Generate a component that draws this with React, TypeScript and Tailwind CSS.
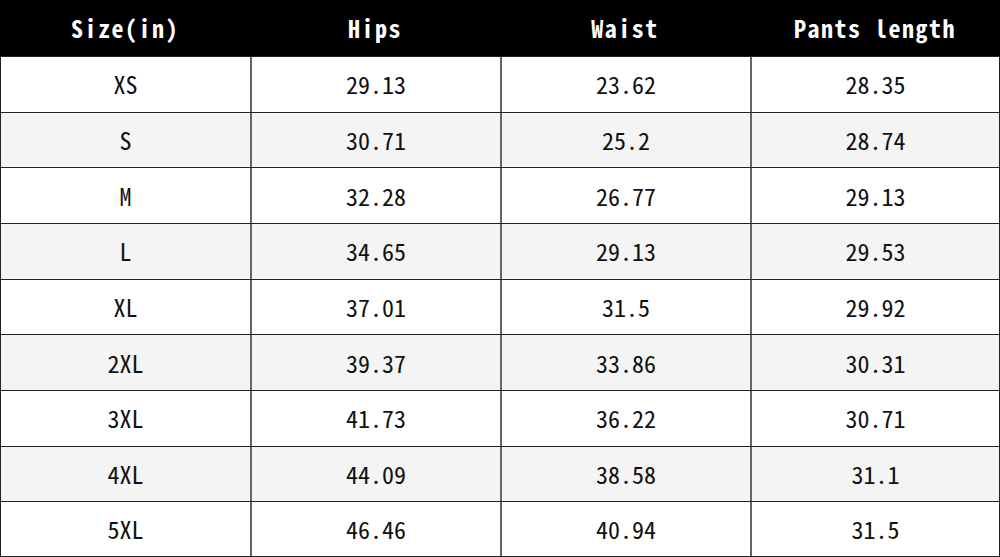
import React from "react";

const headers = ["Size(in)", "Hips", "Waist", "Pants length"];
const rows: string[][] = [
  ["XS", "29.13", "23.62", "28.35"],
  ["S", "30.71", "25.2", "28.74"],
  ["M", "32.28", "26.77", "29.13"],
  ["L", "34.65", "29.13", "29.53"],
  ["XL", "37.01", "31.5", "29.92"],
  ["2XL", "39.37", "33.86", "30.31"],
  ["3XL", "41.73", "36.22", "30.71"],
  ["4XL", "44.09", "38.58", "31.1"],
  ["5XL", "46.46", "40.94", "31.5"],
];

const font = {
  fontFamily: '"Noto Sans Mono CJK SC", "DejaVu Sans Mono", monospace',
};

export default function App() {
  return (
    <div
      className="w-[1000px] h-[557px] bg-white grid grid-rows-[56px_repeat(9,1fr)] overflow-hidden"
      style={font}
    >
      <div className="grid grid-cols-4 bg-black text-white text-[24px] font-bold tracking-[1.5px]">
        {headers.map((h) => (
          <div key={h} className="flex items-center justify-center">
            {h}
          </div>
        ))}
      </div>
      {rows.map((r, i) => (
        <div
          key={i}
          className={`grid grid-cols-[249px_250px_250px_249px] border-t border-[#222] border-l border-r ${
            i % 2 === 1 ? "bg-[#f4f4f4]" : "bg-white"
          } ${i === rows.length - 1 ? "border-b" : ""}`}
        >
          {r.map((c, j) => (
            <div
              key={j}
              className={`flex items-center justify-center text-[24px] text-[#111] ${
                j > 0 ? "border-l-2 border-[#666]" : ""
              }`}
            >
              {c}
            </div>
          ))}
        </div>
      ))}
    </div>
  );
}
